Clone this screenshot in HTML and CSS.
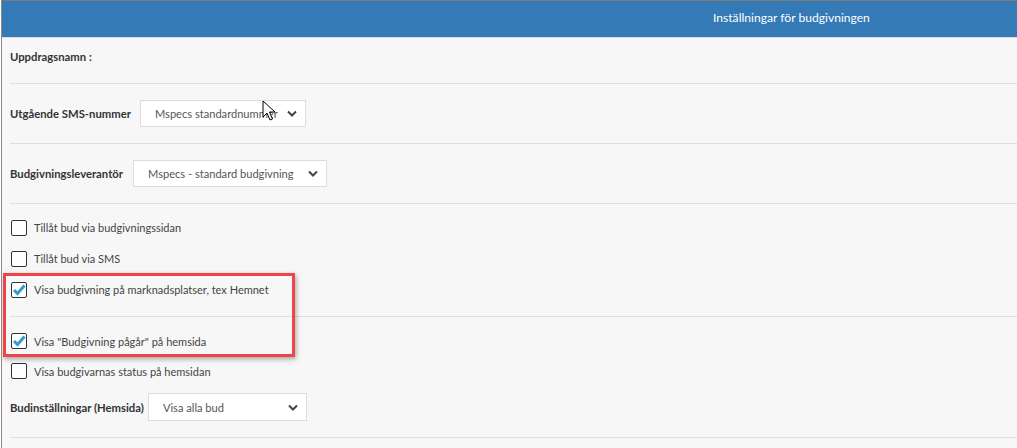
FILE: index.html
```html
<!DOCTYPE html>
<html lang="sv">
<head>
<meta charset="utf-8">
<title>Inställningar för budgivningen</title>
<link rel="stylesheet" href="styles.css">
</head>
<body>
<div class="panel">
  <div class="header">Inställningar för budgivningen</div>
  <div class="content">
    <div class="row row-name">
      <span class="label">Uppdragsnamn :</span>
    </div>
    <div class="row row-select">
      <span class="label">Utgående SMS-nummer</span>
      <div class="select sel-sms">
        <span>Mspecs standardnummer</span>
        <svg class="chev" width="10" height="7" viewBox="0 0 10 7"><polyline points="1,1.5 5,5.5 9,1.5" fill="none" stroke="#444" stroke-width="2"/></svg>
      </div>
    </div>
    <div class="row row-select">
      <span class="label">Budgivningsleverantör</span>
      <div class="select sel-lev">
        <span>Mspecs - standard budgivning</span>
        <svg class="chev" width="10" height="7" viewBox="0 0 10 7"><polyline points="1,1.5 5,5.5 9,1.5" fill="none" stroke="#444" stroke-width="2"/></svg>
      </div>
    </div>
    <div class="row row-checks">
      <label class="check"><span class="box"></span>Tillåt bud via budgivningssidan</label>
      <label class="check"><span class="box"></span>Tillåt bud via SMS</label>
      <label class="check"><span class="box checked"><svg width="14" height="14" viewBox="0 0 14 14"><polyline points="2,7 5.5,10.5 12.5,2.5" fill="none" stroke="#2a9fd6" stroke-width="3"/></svg></span>Visa budgivning på marknadsplatser, tex Hemnet</label>
    </div>
    <div class="row row-checks2">
      <label class="check c30"><span class="box checked"><svg width="14" height="14" viewBox="0 0 14 14"><polyline points="2,7 5.5,10.5 12.5,2.5" fill="none" stroke="#2a9fd6" stroke-width="3"/></svg></span>Visa "Budgivning pågår" på hemsida</label>
      <label class="check c30"><span class="box"></span>Visa budgivarnas status på hemsidan</label>
      <div class="inline">
        <span class="label">Budinställningar (Hemsida)</span>
        <div class="select sel-bud">
          <span>Visa alla bud</span>
          <svg class="chev" width="10" height="7" viewBox="0 0 10 7"><polyline points="1,1.5 5,5.5 9,1.5" fill="none" stroke="#444" stroke-width="2"/></svg>
        </div>
      </div>
    </div>
  </div>
  <div class="highlight"></div>
  <svg class="cursor" width="14" height="22" viewBox="0 0 14 22"><path d="M1,1 L1,17 L5,13 L8,20 L10.5,19 L7.5,12 L13,12 Z" fill="#fff" stroke="#000" stroke-width="1" stroke-linejoin="round"/></svg>
</div>
</body>
</html>
```
FILE: styles.css
```css
html, body {
  margin: 0;
  padding: 0;
  background: #fff;
  font-family: Lato, "Open Sans", sans-serif;
  overflow: hidden;
}
.panel {
  position: relative;
  margin-left: 1px;
  border-left: 1px solid #8c8c8c;
  border-top: 1px solid #7a7a7a;
  background: #f7f7f7;
  height: 447px;
  overflow: hidden;
}
.header {
  height: 36px;
  background: #337ab7;
  color: #fff;
  font-size: 12.1px;
  line-height: 33px;
  padding-left: 711px;
  border-bottom: 1px solid #dcdcdc;
  white-space: nowrap;
}
.content {
  padding-left: 8px;
}
.row {
  border-bottom: 1px solid #dedede;
  box-sizing: border-box;
}
.label {
  font-weight: bold;
  font-size: 11.3px;
  color: #333;
  white-space: nowrap;
}
.row-name {
  height: 46px;
  padding-top: 9px;
  line-height: 16px;
}
.row-select {
  height: 60px;
  display: flex;
  align-items: center;
}
.select {
  box-sizing: border-box;
  height: 27px;
  background: #fff;
  border: 1px solid #ddd;
  display: flex;
  align-items: center;
  justify-content: space-between;
  padding: 0 8px 0 14px;
  font-size: 11.1px;
  color: #555;
  white-space: nowrap;
}
.sel-sms { width: 166px; margin-left: 9px; }
.sel-lev { width: 194px; margin-left: 10px; }
.sel-bud { width: 159px; margin-left: 4px; height: 28px; }
.row-checks {
  height: 113px;
  padding-top: 8px;
}
.check {
  display: flex;
  align-items: center;
  height: 31px;
  font-size: 11px;
  color: #444;
  white-space: nowrap;
}
.check.c30 { height: 30px; }
.box {
  box-sizing: border-box;
  width: 16px;
  height: 16px;
  border: 1px solid #333;
  border-radius: 2px;
  background: #fff;
  margin: 0 7px 0 1px;
  display: flex;
  align-items: center;
  justify-content: center;
}
.row-checks2 {
  height: 121px;
  padding-top: 9px;
}
.inline {
  display: flex;
  align-items: center;
  margin-top: 7px;
}
.highlight {
  position: absolute;
  left: 1px;
  top: 272px;
  width: 292px;
  height: 84px;
  box-sizing: border-box;
  border: 3px solid #f0444a;
  box-shadow: 1px 2px 5px rgba(0,0,0,0.35);
}
.cursor {
  position: absolute;
  left: 260px;
  top: 99px;
}
```
